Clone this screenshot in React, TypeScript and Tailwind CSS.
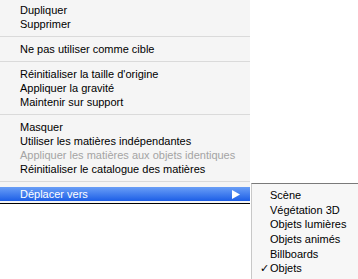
import React from "react";

type Item = { label: string; disabled?: boolean } | "sep";

const items: Item[] = [
  { label: "Dupliquer" },
  { label: "Supprimer" },
  "sep",
  { label: "Ne pas utiliser comme cible" },
  "sep",
  { label: "Réinitialiser la taille d'origine" },
  { label: "Appliquer la gravité" },
  { label: "Maintenir sur support" },
  "sep",
  { label: "Masquer" },
  { label: "Utiliser les matières indépendantes" },
  { label: "Appliquer les matières aux objets identiques", disabled: true },
  { label: "Réinitialiser le catalogue des matières" },
  "sep",
];

const subItems = [
  "Scène",
  "Végétation 3D",
  "Objets lumières",
  "Objets animés",
  "Billboards",
  "Objets",
];

const App: React.FC = () => {
  return (
    <div
      className="w-[358px] h-[279px] bg-white overflow-hidden text-[11px] leading-[14px] text-black"
      style={{ fontFamily: '"Liberation Sans", Arial, sans-serif' }}
    >
      <div className="w-[250px] bg-[#f5f5f5] pt-[3px] pb-[2px] border-b border-black">
        {items.map((item, i) =>
          item === "sep" ? (
            <div key={i} className="py-[5px]">
              <div className="h-px bg-[#dadada]" />
            </div>
          ) : (
            <div
              key={i}
              className={`h-[14px] pl-[20px] whitespace-nowrap ${
                item.disabled ? "text-[#a4a4a4]" : ""
              }`}
            >
              {item.label}
            </div>
          )
        )}
        <div className="relative h-[14px] pl-[20px] flex items-center bg-gradient-to-b from-[#6a9ef6] to-[#1b5de6] text-white">
          <span>Déplacer vers</span>
          <svg
            width="8"
            height="9"
            viewBox="0 0 8 9"
            className="ml-auto mr-[10px]"
          >
            <path d="M0 0 L8 4.5 L0 9 Z" fill="white" />
          </svg>
          <div className="absolute left-full top-[-4px] ml-px w-[110px] bg-[#f7f7f7] border-t border-[#7a7a7a] border-l border-l-[#c8c8c8] pt-[4px] pb-[6px] text-black">
            {subItems.map((s) => (
              <div key={s} className="relative h-[14.6px] pl-[18px] whitespace-nowrap flex items-center">
                {s === "Objets" && (
                  <span className="absolute left-[8px]">✓</span>
                )}
                {s}
              </div>
            ))}
          </div>
        </div>
      </div>
    </div>
  );
};

export default App;
